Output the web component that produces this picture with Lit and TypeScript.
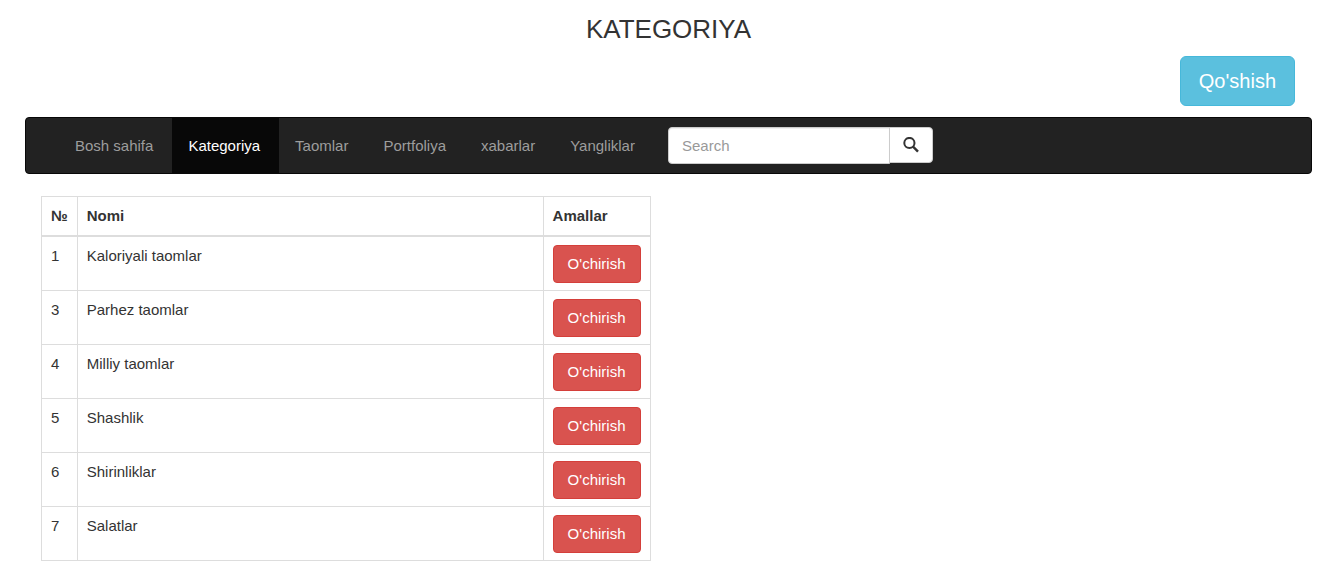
import { LitElement, html, css } from "lit";
import { customElement, property, state } from "lit/decorators.js";
import { classMap } from "lit/directives/class-map.js";

interface Category {
  id: number;
  name: string;
}

@customElement("site-nav")
class SiteNav extends LitElement {
  @property() active = "";

  static styles = css`
    :host {
      display: block;
    }
    .bar {
      display: flex;
      flex-wrap: wrap;
      align-items: center;
      padding: 0 33px;
      background: #222;
      border: 1px solid #080808;
      border-radius: 4px;
    }
    .links {
      display: flex;
      flex-wrap: wrap;
      margin: 0;
      padding: 0;
      list-style: none;
    }
    .link {
      display: block;
      padding: 17px 19px 16px 16px;
      line-height: 22px;
      color: #9d9d9d;
      text-decoration: none;
    }
    .link.active {
      color: #fff;
      background: #080808;
    }
    .search {
      display: flex;
      align-items: flex-start;
      margin: 0 14px;
    }
    .field {
      box-sizing: border-box;
      width: 222px;
      height: 37px;
      padding: 6px 13px;
      font: inherit;
      color: #555;
      background: #fff;
      border: 1px solid #ccc;
      border-radius: 4px 0 0 4px;
      box-shadow: inset 0 1px 1px rgba(0, 0, 0, 0.075);
      outline: 0;
    }
    .field::placeholder {
      color: #999;
      opacity: 1;
    }
    .submit {
      box-sizing: border-box;
      display: flex;
      align-items: center;
      justify-content: center;
      width: 44px;
      height: 36px;
      margin: 0 0 0 -1px;
      padding: 0;
      color: #333;
      background: #fff;
      border: 1px solid #ccc;
      border-radius: 0 4px 4px 0;
      cursor: pointer;
    }
    .icon {
      display: block;
      width: 16px;
      height: 16px;
    }
  `;

  private items = ["Bosh sahifa", "Kategoriya", "Taomlar", "Portfoliya", "xabarlar", "Yangliklar"];

  render() {
    return html`
      <nav class="bar">
        <ul class="links">
          ${this.items.map(
            (item) => html`<li>
              <a class=${classMap({ link: true, active: item === this.active })} href="#">${item}</a>
            </li>`
          )}
        </ul>
        <form class="search" @submit=${(e: Event) => e.preventDefault()}>
          <input class="field" type="text" placeholder="Search" aria-label="Search" />
          <button class="submit" type="submit" aria-label="Search">
            <svg class="icon" viewBox="0 0 16 16" fill="none" stroke="currentColor" aria-hidden="true">
              <circle cx="6.4" cy="6" r="5.1" stroke-width="2" />
              <path d="M9.8 9.4 L15 14.6" stroke-width="2.4" />
            </svg>
          </button>
        </form>
      </nav>
    `;
  }
}

@customElement("category-table")
class CategoryTable extends LitElement {
  @property({ attribute: false }) rows: Category[] = [];

  static styles = css`
    :host {
      display: block;
    }
    .table {
      width: 100%;
      border-collapse: collapse;
      border: 1px solid #ddd;
      line-height: 22px;
    }
    .table th,
    .table td {
      padding: 8px 9px;
      border: 1px solid #ddd;
      text-align: left;
      vertical-align: top;
    }
    .table th {
      border-bottom-width: 2px;
    }
    .table td {
      padding-bottom: 7px;
    }
    .name {
      width: 100%;
    }
    .delete {
      display: block;
      padding: 7px 14px;
      font: inherit;
      line-height: 22px;
      white-space: nowrap;
      color: #fff;
      background: #d9534f;
      border: 1px solid #d43f3a;
      border-radius: 4px;
      cursor: pointer;
    }
  `;

  private remove(id: number) {
    this.dispatchEvent(new CustomEvent("remove-category", { detail: id }));
  }

  render() {
    return html`
      <table class="table">
        <thead>
          <tr>
            <th scope="col">№</th>
            <th class="name" scope="col">Nomi</th>
            <th scope="col">Amallar</th>
          </tr>
        </thead>
        <tbody>
          ${this.rows.map(
            (row) => html`<tr>
              <td>${row.id}</td>
              <td>${row.name}</td>
              <td>
                <button class="delete" type="button" @click=${() => this.remove(row.id)}>O'chirish</button>
              </td>
            </tr>`
          )}
        </tbody>
      </table>
    `;
  }
}

@customElement("app-root")
class AppRoot extends LitElement {
  @state() private categories: Category[] = [
    { id: 1, name: "Kaloriyali taomlar" },
    { id: 3, name: "Parhez taomlar" },
    { id: 4, name: "Milliy taomlar" },
    { id: 5, name: "Shashlik" },
    { id: 6, name: "Shirinliklar" },
    { id: 7, name: "Salatlar" },
  ];

  static styles = css`
    :host {
      display: block;
      padding: 11px 15px 24px 25px;
      font-family: "Liberation Sans", Arial, sans-serif;
      font-size: 15px;
      line-height: 22px;
      color: #333;
      background: #fff;
    }
    .title {
      margin: 0;
      font-size: 26px;
      font-weight: 400;
      line-height: 36px;
      text-align: center;
    }
    .actions {
      display: flex;
      justify-content: flex-end;
      padding: 9px 17px 11px;
    }
    .add {
      padding: 10px 18px;
      font: inherit;
      font-size: 20px;
      line-height: 28px;
      color: #fff;
      background: #5bc0de;
      border: 1px solid #46b8da;
      border-radius: 6px;
      cursor: pointer;
    }
    .content {
      box-sizing: border-box;
      width: 50%;
      padding: 22px 18px 0 16px;
    }
  `;

  private onRemove(e: CustomEvent<number>) {
    this.categories = this.categories.filter((c) => c.id !== e.detail);
  }

  render() {
    return html`
      <h1 class="title">KATEGORIYA</h1>
      <div class="actions">
        <button class="add" type="button">Qo'shish</button>
      </div>
      <site-nav active="Kategoriya"></site-nav>
      <main class="content">
        <category-table .rows=${this.categories} @remove-category=${this.onRemove}></category-table>
      </main>
    `;
  }
}
